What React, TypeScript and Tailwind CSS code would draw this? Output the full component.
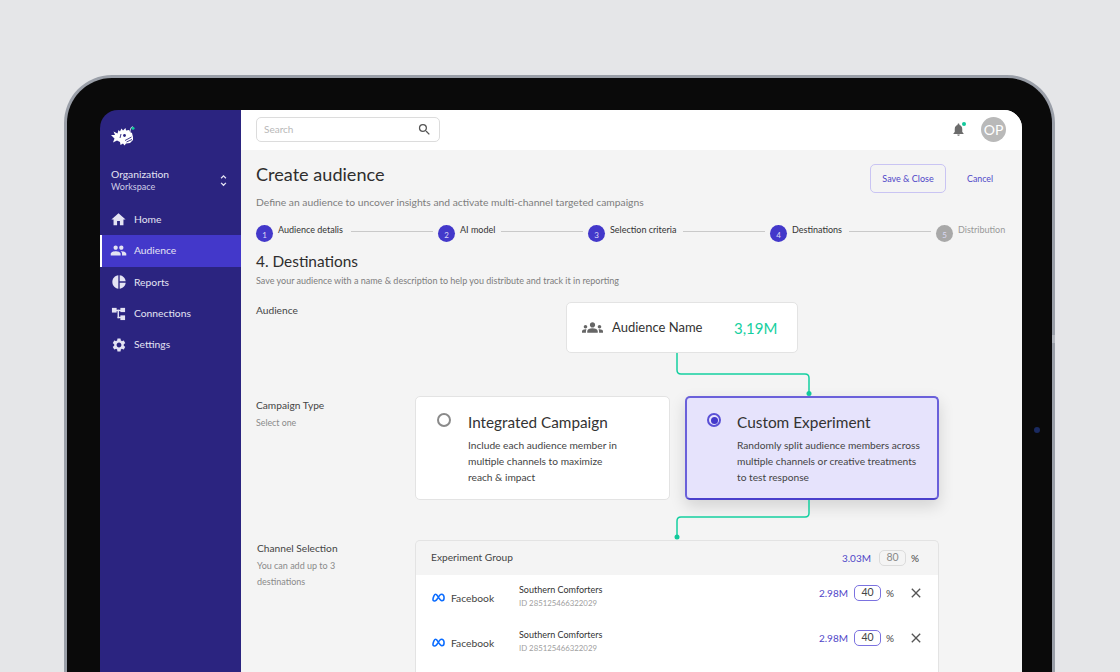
import React from 'react';
import { MdHome, MdPeople, MdPieChart, MdSettings, MdNotifications, MdGroups, MdSearch, MdClose, MdUnfoldMore } from 'react-icons/md';

const font = { fontFamily: 'Lato, sans-serif' };

const ConnectionsIcon = ({ className }: { className?: string }) => (
  <svg viewBox="0 0 16 16" className={className} fill="currentColor">
    <rect x="1" y="2" width="5" height="5" />
    <rect x="10" y="2" width="5" height="4.5" />
    <rect x="10" y="10" width="5" height="5" />
    <rect x="5" y="4" width="6" height="1.5" />
    <rect x="7" y="4" width="1.5" height="9" />
    <rect x="7" y="11.5" width="4" height="1.5" />
  </svg>
);

const FishLogo = () => (
  <svg viewBox="0 0 24 21" className="w-[24px] h-[21px]">
    <path d="M0 10 L4 10 L2.5 6.5 L6.5 8.5 L7.5 5 L9 6.5 L10.5 3.5 L12 5.5 L14.5 3 L15 5.5 L18 5 L19 7 L21 8 L22 12 L22 15 L19 18 L15 18.5 L13.5 20.5 L12 18.5 L9.5 20 L9 17 L6 15.5 L2 17.5 L3.5 13.5 Z" fill="#ffffff" />
    <circle cx="13.5" cy="10.5" r="1.4" fill="#2b2480" />
    <path d="M10 9 L9 13 M14 15.5 L20.5 12 M15.5 17 L21 14.5" stroke="#2b2480" strokeWidth="0.9" fill="none" />
    <path d="M19 7 C19.5 3 20.5 1.5 22 2" stroke="#ffffff" strokeWidth="0.9" fill="none" />
    <circle cx="22" cy="3.2" r="1.5" fill="#12c99b" />
  </svg>
);

const MetaLogo = () => (
  <svg viewBox="0 0 14 9" className="w-[13px] h-[9px]" fill="none">
    <path d="M1 7.5 C1 4 2.6 1 4 1 C6 1 8 8 10.6 8 C12.2 8 13 6.8 13 5 C13 2.8 11.8 1 10.2 1 C8 1 6 6 4.6 7.4 C3.2 8.6 1 8.6 1 6.6" stroke="#0a6cff" strokeWidth="1.7" />
  </svg>
);

const navItems = [
  { label: 'Home', icon: <MdHome className="w-[17px] h-[17px]" /> },
  { label: 'Audience', icon: <MdPeople className="w-[17px] h-[17px]" />, active: true },
  { label: 'Reports', icon: <MdPieChart className="w-[16px] h-[16px]" /> },
  { label: 'Connections', icon: <ConnectionsIcon className="w-[15px] h-[15px]" /> },
  { label: 'Settings', icon: <MdSettings className="w-[16px] h-[16px]" /> },
];

const Sidebar = () => (
  <aside className="w-[141px] shrink-0 bg-[#2b2480] text-white">
    <div className="pl-[11px] pt-[15px] h-[51px]"><FishLogo /></div>
    <div className="flex items-center justify-between pl-[11px] pr-[10px] mt-[7px]">
      <div>
        <div className="text-[10.3px] leading-[13px] text-[#e4e3f3]">Organization</div>
        <div className="text-[9px] leading-[12px] text-[#cfcde6]">Workspace</div>
      </div>
      <MdUnfoldMore className="w-[15px] h-[15px] text-[#e4e3f3]" />
    </div>
    <nav className="mt-[11px]">
      {navItems.map((item) => (
        <div
          key={item.label}
          className={`flex items-center h-[31.3px] gap-[7px] text-[10.3px] text-[#e4e3f3] ${item.active ? 'bg-[#4338ca] border-l-[2px] border-white pl-[8px]' : 'pl-[10px]'}`}
        >
          <span className="w-[17px] flex justify-center">{item.icon}</span>
          <span>{item.label}</span>
        </div>
      ))}
    </nav>
  </aside>
);

const steps = [
  { n: 1, label: 'Audience detalis', w: 'w-[73px]' },
  { n: 2, label: 'AI model', w: 'w-[41px]' },
  { n: 3, label: 'Selection criteria', w: 'w-[73px]' },
  { n: 4, label: 'Destinations', w: 'w-[57px]' },
  { n: 5, label: 'Distribution', w: 'w-[47px]', muted: true },
];

const Stepper = () => (
  <div className="flex items-start mt-[15px] h-[18px]">
    {steps.map((s) => (
      <React.Fragment key={s.n}>
        <div className={`w-[17px] h-[17px] mt-[1px] rounded-full flex items-center justify-center text-[8px] pt-[2px] text-[#dcdaf5] ${s.muted ? 'bg-[#a8a8a8]' : 'bg-[#4338ca]'}`}>{s.n}</div>
        <div className={`ml-[5px] ${s.w} text-[9px] leading-[12px] whitespace-nowrap ${s.muted ? 'text-[#999999]' : 'text-[#333333]'}`}>{s.label}</div>
        {!s.muted && <div className="w-[82px] h-px bg-[#c9c9c9] mt-[7px] mr-[5px]" />}
      </React.Fragment>
    ))}
  </div>
);

const groupRows = [0, 1];

const Main = () => (
  <div className="flex-1 min-w-0 bg-[#f4f4f4]">
    <header className="h-[40px] bg-white flex items-center justify-between pl-[15px] pr-[16px] pb-[1px]">
      <div className="w-[184px] h-[25px] bg-white border border-[#dcdcdc] rounded-[5px] flex items-center justify-between pl-[7px] pr-[7px]">
        <span className="text-[10px] text-[#b8b8b8]">Search</span>
        <MdSearch className="w-[15px] h-[15px] text-[#555555]" />
      </div>
      <div className="flex items-center gap-[15px]">
        <div className="relative">
          <MdNotifications className="w-[15px] h-[15px] text-[#6b6b6b]" />
          <span className="absolute top-0 right-[0px] w-[4px] h-[4px] rounded-full bg-[#12c99b]" />
        </div>
        <div className="w-[25px] h-[25px] rounded-full bg-[#b9b9b9] text-white text-[14px] flex items-center justify-center">OP</div>
      </div>
    </header>

    <div className="relative pl-[15px] pr-[15px]">
      <div className="flex items-start justify-between pr-[14px]">
        <div>
          <h1 className="text-[18.1px] leading-[24px] mt-[12px] text-[#2e2e2e]">Create audience</h1>
          <p className="text-[10.3px] leading-[14px] mt-[9px] text-[#7d7d7d]">Define an audience to uncover insights and activate multi-channel targeted campaigns</p>
        </div>
        <div className="flex items-center mt-[14px] gap-[21px]">
          <button className="w-[76px] h-[29px] border border-[#c9c4f3] rounded-[5px] text-[9px] text-[#4f46c8]">Save &amp; Close</button>
          <button className="text-[8.8px] text-[#4f46c8]">Cancel</button>
        </div>
      </div>

      <Stepper />

      <h2 className="text-[15.4px] leading-[20px] mt-[9px] text-[#2e2e2e]">4. Destinations</h2>
      <p className="text-[9px] leading-[12px] mt-[4px] text-[#7d7d7d]">Save your audience with a name &amp; description to help you distribute and track it in reporting</p>

      <div className="flex h-[51px] mt-[15px]">
        <div className="w-[310px] text-[10.2px] leading-[14px] text-[#444444] pt-[1px]">Audience</div>
        <div className="w-[232px] h-[51px] bg-white border border-[#e3e3e3] rounded-[5px] flex items-center pl-[15px]">
          <MdGroups className="w-[21px] h-[21px] text-[#666666]" />
          <span className="ml-[9px] pt-[1px] text-[13px] text-[#333333] w-[122px]">Audience Name</span>
          <span className="pt-[1px] text-[15px] text-[#14cfa0]">3,19M</span>
        </div>
      </div>

      <div className="flex mt-[43px]">
        <div className="w-[159px] pt-[2px]">
          <div className="text-[10.2px] leading-[14px] text-[#444444]">Campaign Type</div>
          <div className="text-[8.8px] leading-[12px] mt-[5px] text-[#8a8a8a]">Select one</div>
        </div>
        <div className="flex gap-[15px]">
          <div className="w-[255px] h-[104px] bg-white border border-[#e3e3e3] rounded-[5px] flex pl-[21px] pt-[16px]">
            <span className="w-[14px] h-[14px] rounded-full border-2 border-[#8a8a8a] shrink-0" />
            <div className="ml-[17px] w-[155px]">
              <div className="text-[15.3px] leading-[18px] whitespace-nowrap text-[#333333]">Integrated Campaign</div>
              <p className="text-[10.2px] leading-[16px] mt-[6px] text-[#444444]">Include each audience member in multiple channels to maximize reach &amp; impact</p>
            </div>
          </div>
          <div className="w-[254px] h-[104px] bg-[#e6e3fc] border-2 border-[#6a60da] border-b-[#4a40cc] rounded-[5px] flex pl-[20px] pt-[15px] shadow-[0_6px_16px_rgba(0,0,0,0.14)]">
            <span className="w-[14px] h-[14px] rounded-full border-2 border-[#5a50d6] shrink-0 flex items-center justify-center">
              <span className="w-[7px] h-[7px] rounded-full bg-[#4338ca]" />
            </span>
            <div className="ml-[16px] w-[190px]">
              <div className="text-[15.4px] leading-[18px] text-[#333333]">Custom Experiment</div>
              <p className="text-[10.2px] leading-[16px] mt-[6px] text-[#444444]">Randomly split audience members across multiple channels or creative treatments to test response</p>
            </div>
          </div>
        </div>
      </div>

      <div className="flex mt-[40px]">
        <div className="w-[159px] pt-[1px] pl-[1px]">
          <div className="text-[10.2px] leading-[14px] text-[#444444]">Channel Selection</div>
          <div className="text-[9px] leading-[16px] mt-[3px] text-[#8a8a8a] w-[95px]">You can add up to 3 destinations</div>
        </div>
        <div className="w-[524px] border border-[#e3e3e3] rounded-t-[5px] border-b-0 overflow-hidden h-[140px]">
          <div className="h-[34px] flex items-center justify-between pl-[15px] pr-[19px]">
            <span className="text-[10.2px] text-[#444444]">Experiment Group</span>
            <div className="flex items-center">
              <span className="text-[10px] text-[#4f46c8]">3.03M</span>
              <span className="ml-[8px] w-[27px] h-[16px] border border-[#dcdcdc] rounded-[5px] text-[10.5px] text-[#8a8a8a] flex items-center justify-center">80</span>
              <span className="ml-[5px] text-[10px] text-[#444444]">%</span>
            </div>
          </div>
          <div className="bg-white h-full">
            {groupRows.map((r) => (
              <div key={r} className="h-[45px] flex items-start pl-[16px] pr-[14px]">
                <div className="mt-[18px]"><MetaLogo /></div>
                <span className="mt-[16px] ml-[6px] w-[68px] text-[10.3px] leading-[14px] text-[#444444]">Facebook</span>
                <div className="flex-1 mt-[9px]">
                  <div className="text-[9px] leading-[12px] text-[#333333]">Southern Comforters</div>
                  <div className="text-[7.8px] leading-[12px] mt-[1px] text-[#a0a0a0]">ID 285125466322029</div>
                </div>
                <div className="mt-[10px] flex items-center">
                  <span className="text-[10px] text-[#4f46c8]">2.98M</span>
                  <span className="ml-[6px] w-[27px] h-[16px] border border-[#7b72e0] rounded-[5px] text-[10.5px] text-[#444444] flex items-center justify-center">40</span>
                  <span className="ml-[5px] text-[10px] text-[#444444]">%</span>
                  <MdClose className="ml-[14px] w-[16px] h-[16px] text-[#555555]" />
                </div>
              </div>
            ))}
          </div>
        </div>
      </div>

      {/* connectors between the cards */}
      <svg className="absolute left-0 top-0 w-[781px] h-[522px] pointer-events-none" viewBox="0 0 781 522" fill="none">
        <path d="M436 203 V220 Q436 224 440 224 H564 Q568 224 568 228 V243" stroke="#14cfa0" strokeWidth="1.5" />
        <circle cx="568" cy="243.5" r="2.5" fill="#12c99b" />
        <path d="M568 350 V363 Q568 367 564 367 H440 Q436 367 436 371 V387" stroke="#14cfa0" strokeWidth="1.5" />
        <circle cx="436" cy="387" r="2.5" fill="#12c99b" />
      </svg>
    </div>
  </div>
);

export default function App() {
  return (
    <div className="relative w-[1120px] h-[672px] overflow-hidden bg-[#e5e6e8] pt-[75px] pl-[64px]" style={font}>
      <div className="relative w-[991px] h-[640px] bg-[#0a0a0a] border-[3px] border-b-0 border-[#9a9fa8] rounded-t-[48px] pt-[32px] pl-[33px]">
        <div className="flex w-[922px] h-[600px] rounded-t-[18px] overflow-hidden">
          <Sidebar />
          <Main />
        </div>
        <span className="absolute left-[967px] top-[349px] w-[6px] h-[6px] rounded-full bg-[#1a2a60]" />
        <span className="absolute left-[985px] top-[257px] w-[3px] h-[8px] bg-[#b4b8bf]" />
      </div>
    </div>
  );
}
